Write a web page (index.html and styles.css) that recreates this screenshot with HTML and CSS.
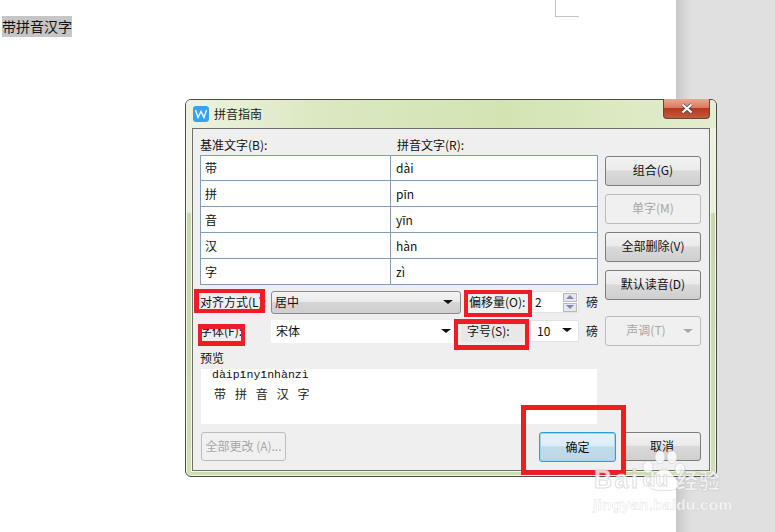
FILE: index.html
```html
<!DOCTYPE html>
<html lang="zh-CN">
<head>
<meta charset="utf-8">
<title>拼音指南</title>
<link rel="stylesheet" href="styles.css">
</head>
<body>
<main class="desk">
  <div class="page">
    <span class="crop"></span>
    <p class="doc-text"><span class="selected">带拼音汉字</span></p>
  </div>
  <div class="side"></div>

  <section class="dialog">
    <header class="titlebar">
      <svg class="app-icon" width="16" height="16" viewBox="0 0 16 16"><rect width="16" height="16" rx="3" fill="#33a5f3"/><path d="M2.5 4 L5 11.5 L8 5.5 L11 11.5 L13.5 4" fill="none" stroke="#fff" stroke-width="1.3"/></svg>
      <span class="title">拼音指南</span>
      <span class="close"><svg width="14" height="11" viewBox="0 0 14 11"><path d="M2.5 1.5 L11.5 9.5 M11.5 1.5 L2.5 9.5" stroke="#4a4a4a" stroke-width="3.6"/><path d="M2.5 1.5 L11.5 9.5 M11.5 1.5 L2.5 9.5" stroke="#fff" stroke-width="2.2"/></svg></span>
    </header>

    <div class="panel">
      <div class="top">
        <div class="left">
          <div class="heads"><span class="head-a">基准文字(B):</span><span>拼音文字(R):</span></div>
          <table class="grid">
            <tr class="first"><td>带</td><td>dài</td></tr>
            <tr><td>拼</td><td>pīn</td></tr>
            <tr><td>音</td><td>yīn</td></tr>
            <tr><td>汉</td><td>hàn</td></tr>
            <tr><td>字</td><td>zì</td></tr>
          </table>
          <div class="form-row row-one">
            <span class="lbl lbl-a">对齐方式(L):</span>
            <span class="combo grey"><span>居中</span><i class="arrow"></i></span>
            <span class="lbl lbl-b">偏移量(O):</span>
            <span class="field spin"><span>2</span><span class="spinner"><b class="up"></b><b class="down"></b></span></span>
            <span class="unit">磅</span>
          </div>
          <div class="form-row row-two">
            <span class="lbl lbl-a">字体(F):</span>
            <span class="combo flat"><span>宋体</span><i class="arrow"></i></span>
            <span class="lbl lbl-b lbl-size">字号(S):</span>
            <span class="field size"><span>10</span><i class="arrow"></i></span>
            <span class="unit">磅</span>
          </div>
          <div class="preview-label">预览</div>
          <div class="preview">
            <div class="ruby">dàipīnyīnhànzì</div>
            <div class="base">带 拼 音 汉 字</div>
          </div>
        </div>
        <div class="right">
          <button class="btn">组合(G)</button>
          <button class="btn off">单字(M)</button>
          <button class="btn">全部删除(V)</button>
          <button class="btn">默认读音(D)</button>
          <button class="btn off tone">声调(T)<i class="arrow pale"></i></button>
        </div>
      </div>
      <div class="bottom">
        <button class="btn off all">全部更改 (A)...</button>
        <button class="btn ok">确定</button>
        <button class="btn cancel">取消</button>
      </div>
    </div>

    <span class="mark m1"></span>
    <span class="mark m2"></span>
    <span class="mark m3"></span>
    <span class="mark m4"></span>
    <span class="mark m5"></span>
  </section>

  <div class="watermark">
    <svg class="paw" width="46" height="44" viewBox="0 0 46 44"><g fill="#fff" fill-opacity=".82" stroke="#bdbdbd" stroke-opacity=".45" stroke-width="1"><ellipse cx="8" cy="18" rx="5" ry="6"/><ellipse cx="20" cy="8" rx="5" ry="6.5"/><ellipse cx="32" cy="8" rx="5" ry="6.5"/><ellipse cx="40" cy="20" rx="5" ry="6"/><path d="M24 20 C17 20 15 27 10 31 C5 36 10 43 24 41 C38 43 43 36 37 31 C32 27 31 20 24 20 Z"/></g></svg>
    <div class="wm-main"><span class="wm-bai">Bai</span><span class="wm-du">du</span><span class="wm-jy">经验</span></div>
    <div class="wm-url">jingyan.baidu.com</div>
  </div>
</main>
</body>
</html>
```

FILE: styles.css
```css
* { box-sizing: border-box; }
html, body { margin: 0; padding: 0; }
body { width: 775px; height: 532px; overflow: hidden; font-family: "Noto Sans CJK SC", "Liberation Sans", sans-serif; font-size: 12px; color: #111; }

.desk { position: relative; display: flex; width: 775px; height: 532px; overflow: hidden; background: #fff; }
.page { position: relative; width: 676px; height: 532px; background: #fff; }
.side { flex: 1; background: linear-gradient(90deg, #c8c8c8 0, #dcdcdc 12px, #e0e0e0 17px); }
.crop { position: absolute; left: 555px; top: 0; width: 24px; height: 17px; border-left: 1px solid #c4c4c4; border-bottom: 1px solid #c4c4c4; }
.doc-text { margin: 0; padding: 16px 0 0 2px; font-size: 14px; line-height: 20px; color: #111; }
.selected { display: inline-block; height: 21px; background: #c6c6c6; }

.dialog { position: absolute; left: 185px; top: 99px; width: 532px; height: 378px; border: 1px solid #4b4b46; border-radius: 6px; padding: 0 6px 5px; display: flex; flex-direction: column; background: linear-gradient(180deg, #eef3e0 0, #e8f0d8 112px, #c6d9a8 114px, #cfe0b0 100%); box-shadow: inset 0 0 0 1px #f4f7ec; }
.titlebar { position: relative; flex: none; height: 28px; margin: 0 -6px; padding: 6px 0 0 7px; display: flex; align-items: flex-start; gap: 5px; border-radius: 5px 5px 0 0; background: linear-gradient(90deg, #eef3e0 0, #dbe8c2 25%, #d3e4b2 60%, #e3edcf 100%); }
.title { font-size: 12px; line-height: 16px; color: #1c1c1c; }
.close { position: absolute; right: 6px; top: -1px; width: 47px; height: 20px; display: flex; align-items: center; justify-content: center; border: 1px solid #5c4a44; border-top: 0; border-radius: 0 0 4px 4px; background: linear-gradient(180deg, #efa58f 0, #dd7a60 45%, #b23a1d 50%, #c25a3e 100%); }

.panel { flex: 1; border: 1px solid #6f6f6a; background: #efefef; padding: 7px 8px 8px 7px; display: flex; flex-direction: column; box-shadow: 0 0 0 1px #f4f7ec; }
.top { display: flex; gap: 7px; }
.left { width: 398px; }
.heads { display: flex; height: 19px; line-height: 17px; font-size: 12px; }
.head-a { width: 197px; }
.grid { width: 398px; border-collapse: collapse; background: #fff; table-layout: fixed; }
.grid td { height: 26px; padding: 0 0 0 4px; border: 1px solid #7f9db9; font-size: 12px; line-height: 16px; }
.grid td:first-child { width: 190px; }
.grid td:last-child { padding-left: 5px; }
.grid .first td { height: 25px; }

.form-row { display: flex; align-items: flex-start; }
.row-one { margin-top: 6px; height: 24px; }
.row-two { margin-top: 5px; height: 24px; }
.lbl { line-height: 21px; height: 23px; }
.lbl-a { width: 71px; flex: none; }
.lbl-b { flex: none; width: 69px; padding-left: 8px; }
.combo { flex: none; width: 190px; height: 23px; padding: 0 7px 2px 3px; display: flex; align-items: center; justify-content: space-between; }
.grey { border: 1px solid #8a8a8a; border-radius: 3px; background: linear-gradient(180deg, #f3f3f3 0, #ebebeb 45%, #d5d5d5 50%, #cfcfcf 100%); }
.flat { width: 187px; background: #fff; padding-left: 5px; border-radius: 2px; margin-right: 3px; }
.lbl-size { background: #e8e8e8; padding-left: 6px; height: 22px; }
.arrow { display: block; width: 0; height: 0; border-style: solid; border-width: 4px 5px 0; border-color: #111 transparent transparent; }
.arrow.pale { border-top-color: #a8a8a8; }
.field { flex: none; width: 49px; height: 22px; background: #fff; border: 1px solid #e2e2e2; border-radius: 2px; display: flex; align-items: center; justify-content: space-between; padding: 0 1px 2px 4px; }
.size { padding: 0 6px 2px 6px; }
.spinner { display: flex; flex-direction: column; gap: 1px; width: 14px; margin-bottom: -2px; }
.spinner b { height: 9px; display: block; position: relative; background: #e8e8e8; border: 1px solid #b8b8b8; }
.spinner b::after { content: ""; position: absolute; left: 2px; border-style: solid; border-width: 0 4px 4px; border-color: transparent transparent #7d86b8; top: 1px; }
.spinner b.down::after { border-width: 4px 4px 0; border-color: #7d86b8 transparent transparent; }
.unit { margin-left: 7px; line-height: 21px; }

.preview-label { height: 25px; padding-top: 5px; line-height: 17px; }
.preview { width: 396px; height: 55px; margin-left: 1px; background: #fff; padding: 0 0 0 11px; }
.ruby { font-family: "Liberation Mono", monospace; font-size: 11.5px; line-height: 11px; height: 17px; color: #111; }
.base { font-size: 12px; line-height: 16px; padding-left: 2px; word-spacing: 5.4px; letter-spacing: .4px; color: #222; }

.right { width: 96px; padding-top: 20px; display: flex; flex-direction: column; }
.btn { display: block; width: 96px; height: 30px; margin: 0 0 8px; padding: 0 0 4px; font: inherit; font-size: 12px; color: #111; border: 1px solid #7d7d7d; border-radius: 3px; background: linear-gradient(180deg, #f2f2f2 0, #ebebeb 45%, #dadada 50%, #cfcfcf 100%); }
.btn.off { color: #a6a6a6; border-color: #bcbcbc; background: #f0f0f0; }
.tone { position: relative; margin: 8px 0 0; padding-right: 14px; }
.tone .arrow { position: absolute; right: 7px; top: 12px; }
.bottom { margin-top: 8px; display: flex; }
.bottom .btn { padding-bottom: 2px; }
.btn.all { width: 85px; margin: 0 0 0 1px; height: 29px; }
.btn.ok { width: 77px; height: 30px; margin: 0 7px 0 253px; border: 1px solid #2c9ed8; background: linear-gradient(180deg, #e6f2f9 0, #dcecf6 45%, #c0dbea 50%, #bcd8e8 100%); box-shadow: inset 0 0 0 1px #9fd6f2; }
.btn.cancel { width: 78px; height: 29px; margin: 0; }

.mark { position: absolute; border: 4px solid #ee1c25; }
.m1 { left: 8px; top: 189px; width: 71px; height: 24px; border-width: 4px 5px; }
.m2 { left: 12px; top: 224px; width: 47px; height: 22px; border-width: 5px 4px; }
.m3 { left: 278px; top: 190px; width: 68px; height: 27px; border-width: 4px 4px; }
.m4 { left: 268px; top: 219px; width: 75px; height: 31px; border-width: 5px 4px; }
.m5 { left: 335px; top: 305px; width: 105px; height: 70px; border-width: 5px; }

.watermark { position: absolute; left: 594px; top: 449px; width: 140px; height: 70px; }
.paw { position: absolute; left: 46px; top: 0; }
.wm-main { position: absolute; left: 0; top: 13px; display: flex; align-items: center; font-family: "Liberation Sans", sans-serif; font-weight: 700; color: rgba(255,255,255,.8); -webkit-text-stroke: 1px rgba(190,190,190,.5); }
.wm-bai { font-size: 25px; line-height: 34px; letter-spacing: 2.5px; }
.wm-du { font-size: 21px; line-height: 34px; margin-left: 2px; }
.wm-jy { font-family: "Noto Sans CJK SC", sans-serif; font-size: 21px; line-height: 34px; margin-left: 9px; letter-spacing: 1px; }
.wm-url { position: absolute; left: -1px; top: 47px; font-family: "Liberation Sans", sans-serif; font-size: 15.5px; line-height: 18px; letter-spacing: .2px; color: rgba(255,255,255,.75); font-weight: 700; -webkit-text-stroke: .5px rgba(190,190,190,.45); white-space: nowrap; }
```
